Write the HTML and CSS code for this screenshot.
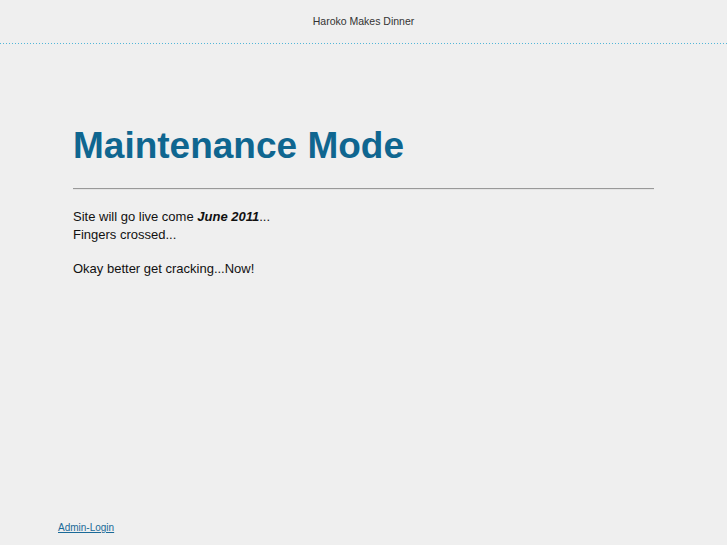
FILE: index.html
```html
<!DOCTYPE html>
<html lang="en">
  <head>
    <meta charset="UTF-8" />
    <title>Haroko Makes Dinner</title>
    <link rel="stylesheet" href="styles.css">
  </head>
  <body>
    <div class="site-header">Haroko Makes Dinner</div>

    <div class="page">
      <div class="content">
        <h1 class="title">Maintenance Mode</h1>
        <hr class="rule" />
        <p>Site will go live come <strong><em>June 2011</em></strong>...<br />Fingers crossed...</p>
        <p>Okay better get cracking...Now!</p>
      </div>

      <div class="footer">
        <a href="#" class="admin-login">Admin-Login</a>
      </div>
    </div>
  </body>
</html>
```

FILE: styles.css
```css
html,
body {
  margin: 0;
  padding: 0;
  width: 100%;
  height: 100%;
  background: #efefef;
  font-family: "Liberation Sans", Arial, sans-serif;
  color: #111;
}

body {
  display: flex;
  flex-direction: column;
}

/* Header */
.site-header {
  height: 44px;
  line-height: 43px;
  text-align: center;
  font-size: 10.5px;
  color: #333;
  background: repeating-linear-gradient(to right, #52b6d8 0 1px, transparent 1px 3px) bottom / 100% 1px no-repeat;
}

.page {
  flex-grow: 1;
  display: flex;
  flex-direction: column;
}

/* Content */
.content {
  flex-grow: 1;
  width: 581px;
  margin: 0 auto;
  padding-top: 82px;
}

.content .title {
  margin: 0;
  font-size: 37px;
  font-weight: bold;
  line-height: 40px;
  color: #0f6690;
}

.content .rule {
  height: 0;
  margin: 22px 0 18px;
  border: none;
  border-top: 1px solid #999;
  border-bottom: 1px solid #e4e4e4;
}

.content p {
  margin: 0 0 16px;
  font-size: 13px;
  line-height: 18px;
}

/* Footer */
.footer {
  width: 611px;
  margin: 0 auto;
  padding-bottom: 10px;
}

.footer .admin-login {
  font-size: 10px;
  color: #1a6a98;
}
```
